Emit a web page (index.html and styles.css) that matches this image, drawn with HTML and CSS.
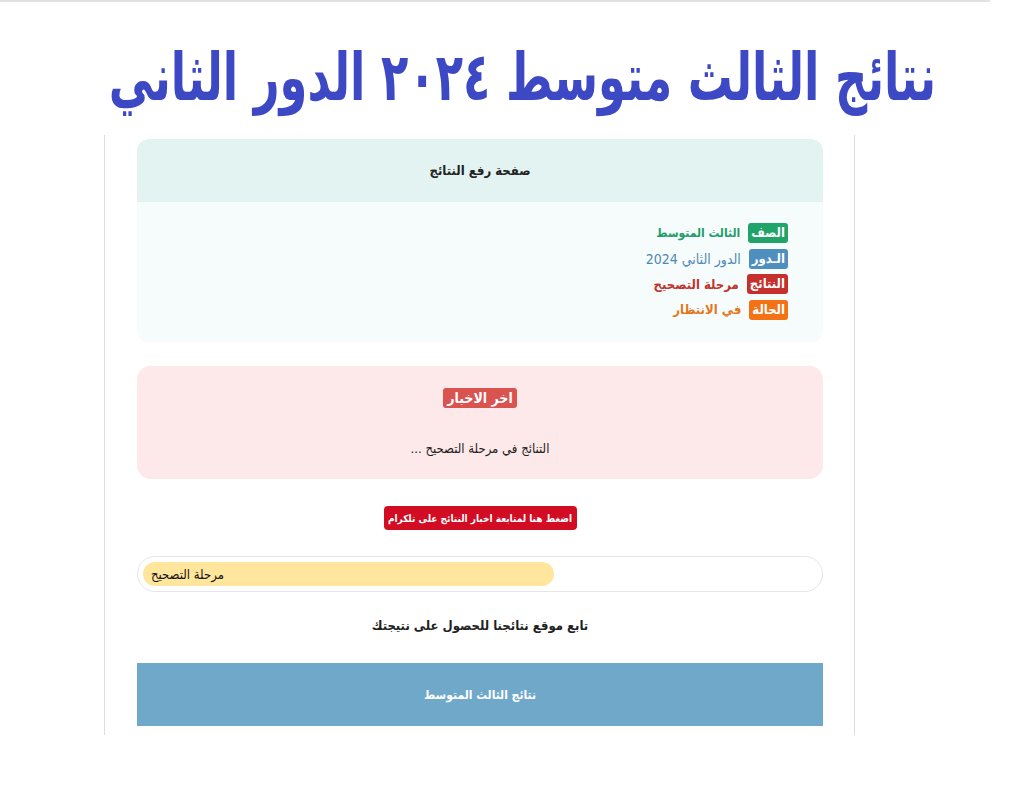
FILE: index.html
```html
<!DOCTYPE html>
<html lang="ar" dir="rtl">
<head>
<meta charset="utf-8">
<link rel="stylesheet" href="styles.css">
</head>
<body>
<div class="topline"></div>
<header class="title-wrap"><h1 class="title">نتائج الثالث متوسط ٢٠٢٤ الدور الثاني</h1></header>
<main class="panel">
  <section class="card info">
    <div class="info-head">صفحة رفع النتائج</div>
    <div class="info-body">
      <div class="row"><span class="badge b-green">الصف</span><span class="val v-green">الثالث المتوسط</span></div>
      <div class="row"><span class="badge b-blue">الـدور</span><span class="val v-blue">الدور الثاني 2024</span></div>
      <div class="row"><span class="badge b-red">النتائج</span><span class="val v-red">مرحلة التصحيح</span></div>
      <div class="row"><span class="badge b-orange">الحالة</span><span class="val v-orange">في الانتظار</span></div>
    </div>
  </section>
  <section class="card news">
    <span class="news-badge">اخر الاخبار</span>
    <p class="news-text">التنائج في مرحلة التصحيح ...</p>
  </section>
  <div class="btn-wrap"><a class="tg-btn">اضغط هنا لمتابعة اخبار النتائج على تلكرام</a></div>
  <div class="progress"><div class="progress-bar" style="width:61%">مرحلة التصحيح</div></div>
  <p class="follow">تابع موقع نتائجنا للحصول على نتيجتك</p>
  <div class="blue-block">نتائج الثالث المتوسط</div>
</main>
</body>
</html>
```
FILE: styles.css
```css
html, body { margin: 0; padding: 0; background: #fff; }
body { font-family: "DejaVu Sans Condensed", "DejaVu Sans", sans-serif; color: #222; direction: rtl; }
.topline { width: 990px; height: 2px; background: #e2e2e2; margin-left: auto; margin-right: 28px; }
.title-wrap {
  margin-top: 30px;
  height: 90px;
  display: flex; justify-content: center; align-items: center;
  padding-left: 26px;
}
.title {
  margin: 0;
  white-space: nowrap;
  font-size: 60px;
  line-height: 90px;
  font-weight: bold;
  color: #3d48c4;
  font-family: "DejaVu Sans Condensed", "DejaVu Sans", sans-serif;
  letter-spacing: -1px;
  transform: scale(0.83, 1.1);
}
.panel {
  width: 686px;
  margin: 13px 163px 0 0;
  border-left: 1px solid #dcdcdc;
  border-right: 1px solid #dcdcdc;
  padding: 4px 31px 9px 32px;
}
.card { border-radius: 12px; overflow: hidden; }
.info-head {
  background: #e2f3f1;
  height: 63px;
  display: flex; align-items: center; justify-content: center;
  font-size: 13px; font-weight: bold; color: #222;
}
.info-body {
  background: #f5fcfb;
  height: 140px;
  box-sizing: border-box;
  padding: 21px 35px 0 0;
  display: flex; flex-direction: column; gap: 5px;
}
.row { display: flex; align-items: center; gap: 8px; height: 20.5px; }
.badge {
  color: #fff; font-weight: bold; font-size: 13px;
  padding: 0 3px; height: 20px; line-height: 20px;
  border-radius: 3px;
}
.b-green { background: #20a469; }
.b-blue { background: #4f8fc0; }
.b-red { background: #c6302c; }
.b-orange { background: #f47216; }
.val { font-size: 12px; font-weight: bold; }
.v-green { color: #1f9d6a; }
.v-blue { color: #4e88b6; font-weight: normal; font-size: 14px; }
.v-red { color: #c0352d; font-size: 13px; }
.v-orange { color: #e3771b; font-size: 13px; }
.news {
  margin-top: 24px;
  background: #fde9e9;
  border-radius: 14px;
  height: 113px;
  display: flex; flex-direction: column; align-items: center;
  padding-top: 22px; box-sizing: border-box;
}
.news-badge {
  background: #d9534f; color: #fff; font-weight: bold; font-size: 14px;
  padding: 0 4px; height: 20px; line-height: 20px; border-radius: 3px;
}
.news-text { margin: 33px 0 0 0; font-size: 13px; color: #222; }
.btn-wrap { display: flex; justify-content: center; margin-top: 27px; }
.tg-btn {
  background: #d20c23; color: #fff; font-weight: bold; font-size: 10px;
  white-space: nowrap;
  width: 193px; height: 24px; border-radius: 4px;
  display: flex; align-items: center; justify-content: center;
}
.progress {
  margin-top: 26px;
  height: 36px; box-sizing: border-box;
  border: 1px solid #e6e6e6; border-radius: 18px;
  padding: 5px;
  direction: ltr;
  display: flex;
}
.progress-bar {
  background: #ffe69c; border-radius: 12px; height: 24px;
  direction: rtl;
  display: flex; align-items: center; justify-content: flex-end;
  padding-left: 8px; box-sizing: border-box;
  font-size: 13px; color: #111;
}
.follow { margin: 26px 0 0 0; text-align: center; font-size: 13px; font-weight: bold; color: #222; line-height: 16px; }
.blue-block {
  margin-top: 29px;
  background: #6fa8c9; color: #fff; font-weight: bold; font-size: 12px;
  height: 63px; display: flex; align-items: center; justify-content: center;
}
```
